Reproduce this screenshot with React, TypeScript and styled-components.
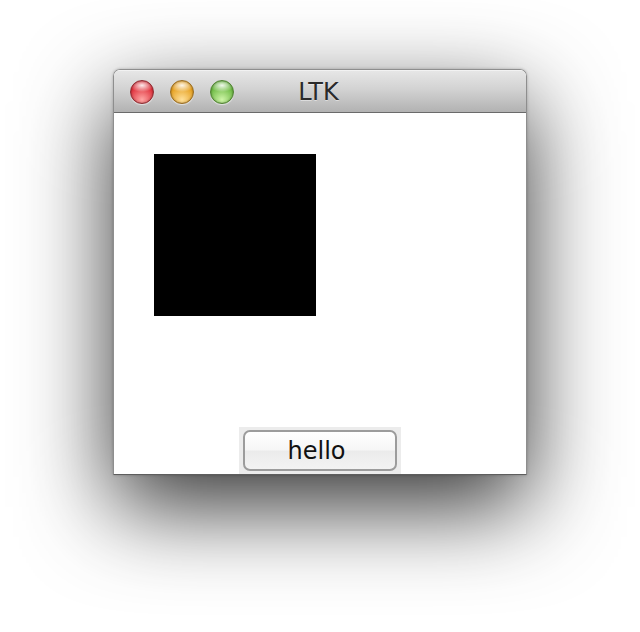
import React from "react";
import styled, { createGlobalStyle } from "styled-components";

const Global = createGlobalStyle`
  html, body { margin: 0; padding: 0; background: #ffffff; }
  body { font-family: "DejaVu Sans", "Liberation Sans", sans-serif; }
`;

const Page = styled.div`
  min-height: 632px;
  box-sizing: border-box;
  padding-top: 69px;
  display: flex;
  flex-direction: column;
  align-items: center;
  background: #ffffff;
`;

const Window = styled.div`
  width: 412px;
  border: 1px solid #8e8e8e;
  border-bottom-color: #5e5e5e;
  border-radius: 7px 7px 0 0;
  overflow: hidden;
  box-shadow: 0 32px 90px rgba(0, 0, 0, 0.8), 0 0 3px rgba(0, 0, 0, 0.25);
  display: flex;
  flex-direction: column;
`;

const TitleBar = styled.div`
  height: 41px;
  border-bottom: 1px solid #6a6a6a;
  border-top: 1px solid #f2f2f2;
  background: linear-gradient(#e6e6e6, #d2d2d2 45%, #b2b2b2);
  display: grid;
  grid-template-columns: 1fr auto 1fr;
  align-items: center;
`;

const Lights = styled.div`
  display: flex;
  gap: 16px;
  padding-left: 16px;
`;

const Light = styled.span<{ $c1: string; $c2: string; $rim: string }>`
  width: 24px;
  height: 24px;
  border-radius: 50%;
  box-sizing: border-box;
  border: 1px solid ${(p) => p.$rim};
  background:
    radial-gradient(ellipse 55% 30% at 50% 20%, rgba(255, 255, 255, 0.9), rgba(255, 255, 255, 0) 100%),
    radial-gradient(circle at 50% 85%, ${(p) => p.$c1} 0%, ${(p) => p.$c2} 70%);
  box-shadow: 0 1px 1px rgba(255, 255, 255, 0.6), inset 0 0 2px rgba(0, 0, 0, 0.4);
`;

const Title = styled.div`
  font-family: "DejaVu Sans", "Liberation Sans", sans-serif;
  font-size: 24px;
  color: #2a2a2a;
  text-shadow: 0 1px 0 rgba(255, 255, 255, 0.45);
  line-height: 1;
  margin-left: -3px;
`;

const Content = styled.div`
  height: 361px;
  background: #ffffff;
  display: flex;
  flex-direction: column;
`;

const Canvas = styled.div`
  flex: 1;
  padding: 41px 0 0 40px;
`;

const Square = styled.div`
  width: 162px;
  height: 162px;
  background: #000000;
`;

const ButtonBar = styled.div`
  align-self: center;
  margin-left: -1px;
  width: 162px;
  height: 47px;
  box-sizing: border-box;
  padding: 3px 4px 0 4px;
  background: #ececec;
`;

const Button = styled.button`
  width: 154px;
  height: 41px;
  box-sizing: border-box;
  border: 2px solid #9c9c9c;
  border-radius: 7px;
  background: linear-gradient(#ffffff, #f6f6f6 48%, #ebebeb 52%, #f3f3f3);
  font-family: "DejaVu Sans", "Liberation Sans", sans-serif;
  font-size: 24px;
  color: #111111;
  padding: 0 6px 0 0;
  line-height: 1;
`;

export default function App() {
  return (
    <>
      <Global />
      <Page>
        <Window>
          <TitleBar>
            <Lights>
              <Light $c1="#ffa6a4" $c2="#dc2632" $rim="#8f2a30" />
              <Light $c1="#ffe09a" $c2="#e39a14" $rim="#9a6c20" />
              <Light $c1="#cff5a8" $c2="#64b43a" $rim="#4f8330" />
            </Lights>
            <Title>LTK</Title>
            <div />
          </TitleBar>
          <Content>
            <Canvas>
              <Square />
            </Canvas>
            <ButtonBar>
              <Button>hello</Button>
            </ButtonBar>
          </Content>
        </Window>
      </Page>
    </>
  );
}
